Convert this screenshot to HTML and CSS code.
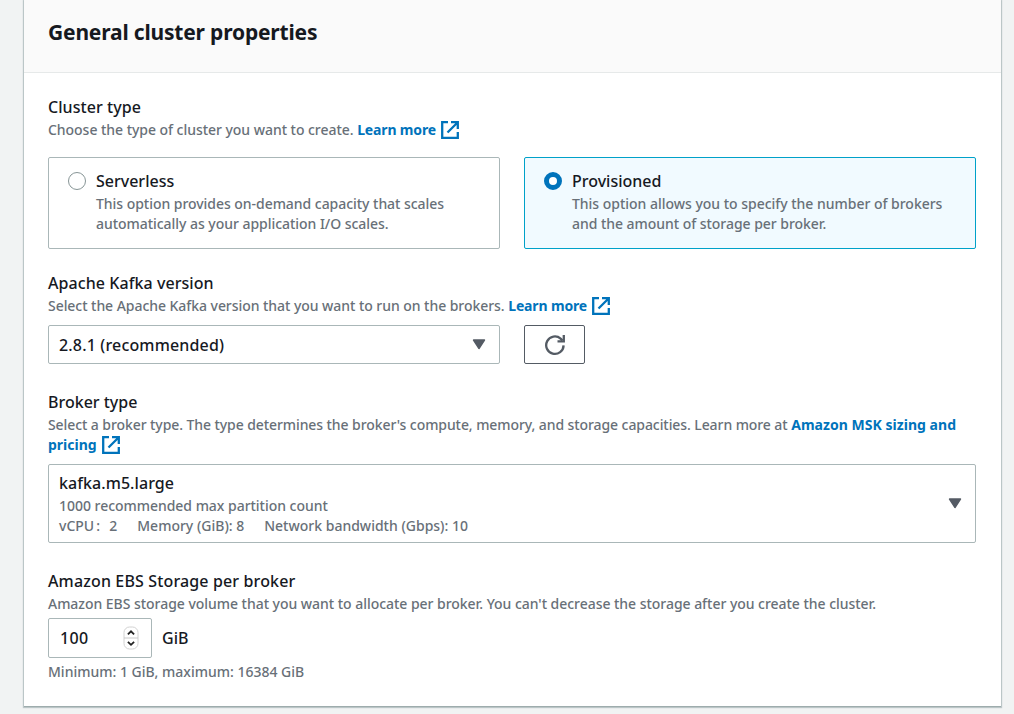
FILE: index.html
```html
<!DOCTYPE html>
<html lang="en">
<head>
<meta charset="utf-8">
<title>General cluster properties</title>
<link rel="stylesheet" href="styles.css">
</head>
<body>
<svg class="defs" width="0" height="0" aria-hidden="true">
  <symbol id="external" viewBox="0 0 18 18"><path d="M7 1.2H1.2V16.8H16.8V11M10 1.2H16.8V8M16.3 1.7L6.5 11.5" fill="none" stroke="currentColor" stroke-width="2.3"/></symbol>
  <symbol id="caret" viewBox="0 0 14 11"><path d="M1.5 1H12.5L7 9.5Z" fill="currentColor" stroke="currentColor" stroke-width="1.4" stroke-linejoin="round"/></symbol>
</svg>
<main class="panel">
  <header class="panel-header"><h2 class="title"><span class="t-title">General cluster properties</span></h2></header>
  <div class="panel-body">
    <section class="field field-type">
      <div class="label"><span class="t-cluster">Cluster type</span></div>
      <div class="desc"><span class="t-choose">Choose the type of cluster you want to create.</span> <a class="link"><span class="t-learn">Learn more</span><svg class="ext"><use href="#external"/></svg></a></div>
      <div class="tiles">
        <div class="tile">
          <span class="radio"></span>
          <div>
            <div class="tile-label"><span class="t-serverless">Serverless</span></div>
            <div class="desc"><span class="t-s1">This option provides on-demand capacity that scales</span><br><span class="t-s2">automatically as your application I/O scales.</span></div>
          </div>
        </div>
        <div class="tile selected">
          <span class="radio"></span>
          <div>
            <div class="tile-label"><span class="t-provisioned">Provisioned</span></div>
            <div class="desc"><span class="t-p1">This option allows you to specify the number of brokers</span><br><span class="t-p2">and the amount of storage per broker.</span></div>
          </div>
        </div>
      </div>
    </section>
    <section class="field field-version">
      <div class="label"><span class="t-kafka">Apache Kafka version</span></div>
      <div class="desc"><span class="t-select">Select the Apache Kafka version that you want to run on the brokers.</span> <a class="link"><span class="t-learn">Learn more</span><svg class="ext"><use href="#external"/></svg></a></div>
      <div class="version-row">
        <div class="select"><span class="t-version">2.8.1 (recommended)</span><svg class="caret"><use href="#caret"/></svg></div>
        <div class="refresh"><svg class="refresh-icon" viewBox="0 0 22 22"><path d="M19.6 11.4A8.7 8.7 0 1 1 16.6 4.6L18.4 6.4" fill="none" stroke="currentColor" stroke-width="2.3"/><path d="M19.8 1V7.4H13.5" fill="none" stroke="currentColor" stroke-width="2.3"/></svg></div>
      </div>
    </section>
    <section class="field field-broker">
      <div class="label"><span class="t-broker">Broker type</span></div>
      <div class="desc"><span class="t-bdesc">Select a broker type. The type determines the broker's compute, memory, and storage capacities. Learn more at</span> <a class="link"><span class="t-sizing">Amazon MSK sizing and</span><br><span class="t-pricing">pricing</span><svg class="ext"><use href="#external"/></svg></a></div>
      <div class="select select-large">
        <div>
          <div class="option-label"><span class="t-m5">kafka.m5.large</span></div>
          <div class="desc"><span class="t-1000">1000 recommended max partition count</span></div>
          <div class="desc specs"><span>vCPU<span class="t-colon">:</span>&nbsp; 2</span><span class="t-memory">Memory (GiB): 8</span><span class="t-network">Network bandwidth (Gbps): 10</span></div>
        </div>
        <svg class="caret"><use href="#caret"/></svg>
      </div>
    </section>
    <section class="field field-storage">
      <div class="label"><span class="t-ebs">Amazon EBS Storage per broker</span></div>
      <div class="desc"><span class="t-ebsdesc">Amazon EBS storage volume that you want to allocate per broker. You can't decrease the storage after you create the cluster.</span></div>
      <div class="storage-row">
        <div class="number"><span class="t-100">100</span><svg class="stepper" viewBox="0 0 16 24"><rect x="1" y="1" width="14" height="22" rx="5.5" fill="#fff" stroke="#d2d2d2"/><path d="M1 12H15" stroke="#c9c9c9"/><path d="M4.9 8.3L8 5.3L11.1 8.3M4.9 15.8L8 18.8L11.1 15.8" fill="none" stroke="#222" stroke-width="1.8"/></svg></div>
        <span class="t-gib">GiB</span>
      </div>
      <div class="desc"><span class="t-min">Minimum: 1 GiB, maximum: 16384 GiB</span></div>
    </section>
  </div>
</main>
</body>
</html>
```
FILE: styles.css
```css
* { box-sizing: border-box; }
body {
  margin: 0;
  height: 714px;
  overflow: hidden;
  background: #f1f3f3;
  color: #16191f;
  font: 500 16px/24px "Noto Sans", "Open Sans", sans-serif;
  white-space: nowrap;
}
.defs { display: block; }
.panel {
  width: 977px;
  height: 706px;
  margin-left: 24px;
  background: #fff;
  box-shadow: 0 1px 1px 1px #aab7b8aa, 0 1px 1px #879596;
}
.panel-header {
  height: 73px;
  padding: 17px 24px;
  background: #fafafa;
  border-bottom: 1px solid #e6e9e9;
}
.title { margin: 0; font-size: 21px; line-height: 31px; font-weight: 700; letter-spacing: -0.18px; }
.panel-body { padding: 22px 25px 0 24px; }
.label, .tile-label { height: 25px; }
.desc { font-size: 14px; line-height: 20px; color: #687078; }
.link { color: #0073bb; font-weight: 700; }
.ext { width: 18px; height: 18px; margin-left: 5px; vertical-align: -4px; }
.tiles { display: grid; grid-template-columns: 452px 452px; gap: 24px; margin-top: 16.5px; }
.tile {
  display: flex;
  gap: 10px;
  height: 92px;
  padding: 11px 19px;
  border: 1px solid #aab7b8;
  border-radius: 2px;
}
.selected { border-color: #00a1c9; background: #f1faff; }
.radio { width: 18px; height: 18px; margin-top: 3px; border: 1.5px solid #879596; border-radius: 50%; background: #fff; }
.selected .radio { border: 5.5px solid #0073bb; }
.field-version { margin-top: 22.5px; }
.version-row { display: flex; gap: 24px; margin-top: 9px; }
.select {
  display: flex;
  align-items: center;
  justify-content: space-between;
  width: 452px;
  height: 39px;
  padding: 0 13px 0 10px;
  border: 1px solid #aab7b8;
  border-radius: 2px;
}
.caret { width: 14px; height: 11px; color: #545b64; }
.refresh {
  display: grid;
  place-items: center;
  width: 61px;
  height: 39px;
  border: 1px solid #545b64;
  border-radius: 2px;
}
.refresh-icon { width: 22px; height: 22px; color: #545b64; }
.field-broker { margin-top: 26px; }
.select-large { width: 928px; height: 79px; margin-top: 9px; }
.option-label { height: 25px; }
.specs { display: flex; gap: 20px; }
.field-storage { margin-top: 26px; }
.storage-row { display: flex; align-items: center; gap: 10px; margin: 4px 0 4px; }
.number {
  display: flex;
  align-items: center;
  justify-content: space-between;
  width: 104px;
  height: 40px;
  padding: 0 12px 0 11px;
  border: 1px solid #aab7b8;
  border-radius: 2px;
}
.stepper { width: 16px; height: 24px; }

/* Text tracking */
.t-choose, .t-s1, .t-s2, .t-p2 { letter-spacing: -0.04px; }
.t-p1 { letter-spacing: -0.02px; }
.t-learn { letter-spacing: -0.15px; }
.t-select { letter-spacing: -0.05px; }
.t-bdesc { letter-spacing: -0.083px; }
.t-sizing { letter-spacing: 0.03px; }
.t-ebsdesc { letter-spacing: -0.035px; }
.t-1000 { letter-spacing: -0.03px; }
.t-cluster, .t-kafka, .t-m5 { letter-spacing: 0.07px; }
.t-version { letter-spacing: 0.16px; }
.t-ebs { letter-spacing: 0.14px; }
.t-100 { letter-spacing: 0.4px; }
.t-colon { padding: 0 2px; }
```
